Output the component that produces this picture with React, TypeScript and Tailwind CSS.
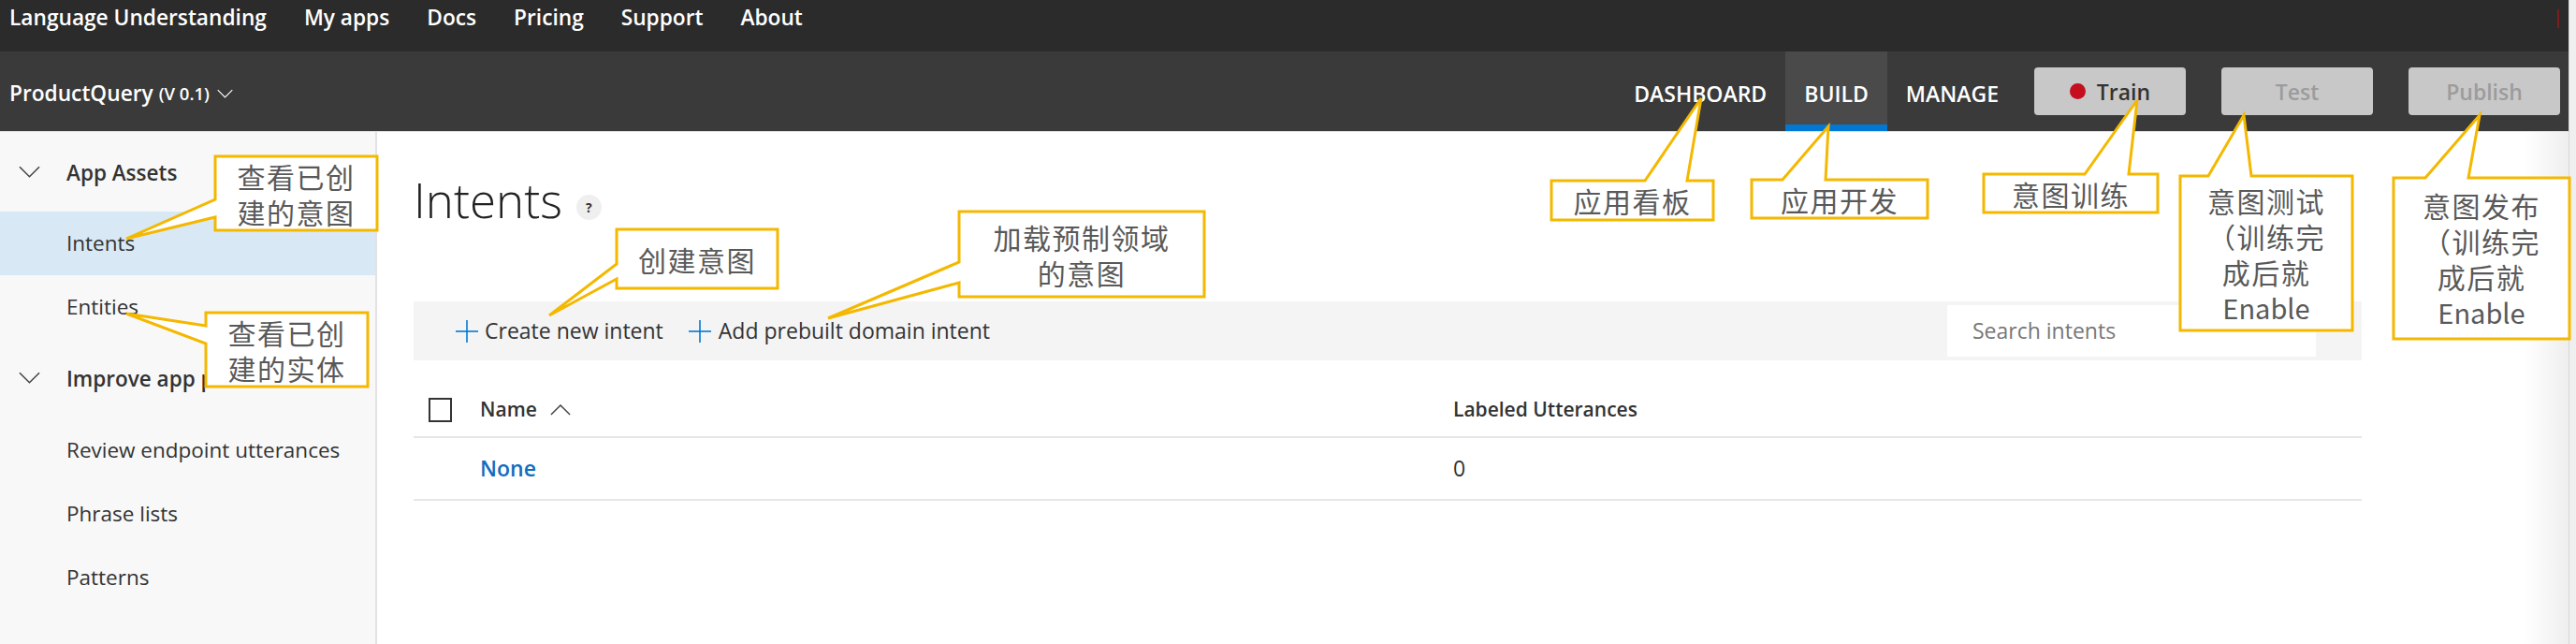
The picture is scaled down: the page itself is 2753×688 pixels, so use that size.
import type { ReactNode } from "react";

type Callout = {
  pts: string;
  box: [number, number, number, number];
  lines: string[];
};

// annotation boxes drawn over the screenshot (absolute coords of the page)
const callouts: Callout[] = [
  { pts: "230,167 403,167 403,246 230,246 230,232 135,255 230,213", box: [230, 167, 403, 246], lines: ["查看已创", "建的意图"] },
  { pts: "220,334 393,334 393,413 220,413 220,367 135,335 220,348", box: [220, 334, 393, 413], lines: ["查看已创", "建的实体"] },
  { pts: "659,245 831,245 831,308 659,308 659,298 587,337 659,282", box: [659, 245, 831, 308], lines: ["创建意图"] },
  { pts: "1025,226 1287,226 1287,317 1025,317 1025,302 885,340 1025,280", box: [1025, 226, 1287, 317], lines: ["加载预制领域", "的意图"] },
  { pts: "1658,193 1758,193 1818,105 1803,193 1831,193 1831,235 1658,235", box: [1658, 193, 1831, 235], lines: ["应用看板"] },
  { pts: "1872,192 1905,192 1954,135 1951,192 2060,192 2060,233 1872,233", box: [1872, 192, 2060, 233], lines: ["应用开发"] },
  { pts: "2120,186 2228,186 2284,107 2275,186 2306,186 2306,227 2120,227", box: [2120, 186, 2306, 227], lines: ["意图训练"] },
  { pts: "2330,188 2360,188 2398,123 2406,188 2514,188 2514,353 2330,353", box: [2330, 188, 2514, 353], lines: ["意图测试", "（训练完", "成后就", "Enable"] },
  { pts: "2558,190 2592,190 2650,123 2638,190 2746,190 2746,362 2558,362", box: [2558, 190, 2746, 362], lines: ["意图发布", "（训练完", "成后就", "Enable"] },
];

function Chevron({ className, up }: { className?: string; up?: boolean }) {
  return (
    <svg viewBox="0 0 24 13" className={className} fill="none" stroke="currentColor" strokeWidth="1.6">
      {up ? <polyline points="1,12 12,1 23,12" /> : <polyline points="1,1 12,12 23,1" />}
    </svg>
  );
}

function Plus() {
  return (
    <svg viewBox="0 0 24 24" className="w-[24px] h-[24px] text-[#0078d4]" fill="none" stroke="currentColor" strokeWidth="1.6">
      <line x1="12" y1="0" x2="12" y2="24" />
      <line x1="0" y1="12" x2="24" y2="12" />
    </svg>
  );
}

function NavItem({ children, active }: { children: ReactNode; active?: boolean }) {
  return (
    <div
      className={`h-full flex items-center px-[20px] pt-[5px] ${
        active ? "bg-[#4a4a4a] shadow-[inset_0_-7px_0_#0078d4]" : ""
      }`}
    >
      {children}
    </div>
  );
}

function SideItem({ children, selected }: { children: ReactNode; selected?: boolean }) {
  return (
    <div className={`h-[68px] flex items-center pl-[71px] ${selected ? "bg-[#d8e8f5]" : ""}`}>{children}</div>
  );
}

function SideGroup({ children, className }: { children: ReactNode; className?: string }) {
  return (
    <div className={`h-[68px] flex items-center font-semibold ${className ?? ""}`}>
      <Chevron className="ml-[20px] w-[23px] h-[13px] -mt-[3px] text-[#444]" />
      <span className="ml-[28px] whitespace-nowrap">{children}</span>
    </div>
  );
}

export default function App() {
  return (
    <div className="relative w-[2753px] h-[688px] overflow-hidden flex bg-white font-['Open_Sans','Noto_Sans',sans-serif]">
      <div className="flex-1 min-w-0 flex flex-col">
        {/* top bar */}
        <header className="h-[55px] bg-[#2b2b2b] flex items-start gap-[40px] px-[10px] pt-[4px] text-white text-[22.7px] leading-[30px] font-semibold">
          <span>Language Understanding</span>
          <span>My apps</span>
          <span>Docs</span>
          <span>Pricing</span>
          <span>Support</span>
          <span>About</span>
          <span className="ml-auto mt-[6px] w-[2px] h-[20px] bg-[#7a1e1e]" />
        </header>

        {/* app bar */}
        <div className="h-[85px] bg-[#3a3a3a] flex text-white">
          <div className="flex items-start pt-[30px] pl-[10px] leading-[30px]">
            <span className="text-[22.7px] font-semibold">ProductQuery</span>
            <span className="ml-[6px] text-[18.5px] font-semibold">(V 0.1)</span>
            <Chevron className="ml-[8px] mt-[10px] w-[17px] h-[10px] text-white" />
          </div>
          <div className="ml-auto flex h-full text-[23px] leading-[30px] font-semibold">
            <NavItem>DASHBOARD</NavItem>
            <NavItem active>BUILD</NavItem>
            <NavItem>MANAGE</NavItem>
            <div className="flex items-center gap-[38px] ml-[18px] mr-[9px]">
              <button className="w-[162px] h-[51px] rounded-[4px] bg-[#c8c8c8] flex items-center justify-center gap-[12px] text-[#333]">
                <span className="w-[17px] h-[17px] rounded-full bg-[#c50f1f]" />
                <span>Train</span>
              </button>
              <button className="w-[162px] h-[51px] rounded-[4px] bg-[#c8c8c8] text-[#9c9c9c]">Test</button>
              <button className="w-[162px] h-[51px] rounded-[4px] bg-[#c8c8c8] text-[#9c9c9c]">Publish</button>
            </div>
          </div>
        </div>

        <div className="flex flex-1 min-h-0 border-t border-[#e0e0e0]">
          {/* sidebar */}
          <aside className="w-[403px] shrink-0 bg-[#f8f8f8] border-r-2 border-[#e3e3e3] text-[22.5px] text-[#333]">
            <SideGroup className="mt-[10px] mb-[7px]">App Assets</SideGroup>
            <SideItem selected>Intents</SideItem>
            <SideItem>Entities</SideItem>
            <SideGroup className="mt-[9px] mb-[8px]">Improve app performance</SideGroup>
            <SideItem>Review endpoint utterances</SideItem>
            <SideItem>Phrase lists</SideItem>
            <SideItem>Patterns</SideItem>
          </aside>

          {/* main */}
          <main className="flex-1 pl-[39px] pt-[47px] text-[#333] bg-[linear-gradient(to_right,#ffffff_98%,#eeeeee)]">
            <div className="w-[2082px]">
              <div className="flex items-end">
                <h1 className="text-[51px] leading-[50px] font-light text-[#222]">Intents</h1>
                <span className="ml-[15px] mb-[3px] w-[27px] h-[27px] rounded-full bg-[#efefef] flex items-center justify-center text-[14px] font-bold">
                  ?
                </span>
              </div>

              <div className="mt-[84px] h-[63px] bg-[#f4f4f4] flex items-center text-[23px]">
                <button className="ml-[45px] flex items-center gap-[7px]">
                  <Plus />
                  <span>Create new intent</span>
                </button>
                <button className="ml-[27px] flex items-center gap-[8px]">
                  <Plus />
                  <span>Add prebuilt domain intent</span>
                </button>
                <div className="ml-auto mr-[49px] w-[394px] h-[55px] bg-white flex items-center pl-[27px] text-[#777]">
                  Search intents
                </div>
              </div>

              <div className="mt-[25px] h-[58px] border-b-2 border-[#e6e6e6] flex items-center text-[21px] font-semibold">
                <div className="w-[71px] pl-[16px]">
                  <div className="w-[25px] h-[26px] border-2 border-[#333]" />
                </div>
                <div className="w-[1040px] flex items-center gap-[14px]">
                  <span>Name</span>
                  <Chevron up className="w-[22px] h-[12px] text-[#444]" />
                </div>
                <div>Labeled Utterances</div>
              </div>

              <div className="h-[67px] border-b-2 border-[#e6e6e6] flex items-center text-[23px]">
                <div className="w-[71px]" />
                <div className="w-[1040px] font-semibold text-[#106ebe]">None</div>
                <div>0</div>
              </div>
            </div>
          </main>
        </div>
      </div>

      {/* scrollbar track */}
      <div className="w-[8px] shrink-0 bg-[#efefef] border-l border-[#d8d8d8]" />

      {/* annotation overlay */}
      <svg className="absolute inset-0 w-[2753px] h-[688px] pointer-events-none" viewBox="0 0 2753 688">
        {callouts.map((c, i) => (
          <polygon key={i} points={c.pts} fill="white" stroke="#f4b800" strokeWidth="3" strokeLinejoin="miter" />
        ))}
      </svg>
      {callouts.map((c, i) => (
        <div
          key={i}
          className="absolute flex flex-col items-center justify-center text-center text-[30px] leading-[38px] tracking-[1.5px] text-[#595959] font-['Noto_Sans_CJK_SC',sans-serif]"
          style={{ left: c.box[0], top: c.box[1], width: c.box[2] - c.box[0], height: c.box[3] - c.box[1] }}
        >
          {c.lines.map((l) => (
            <span key={l} className={l === "Enable" ? "text-[29px] tracking-normal" : ""}>
              {l}
            </span>
          ))}
        </div>
      ))}
    </div>
  );
}
